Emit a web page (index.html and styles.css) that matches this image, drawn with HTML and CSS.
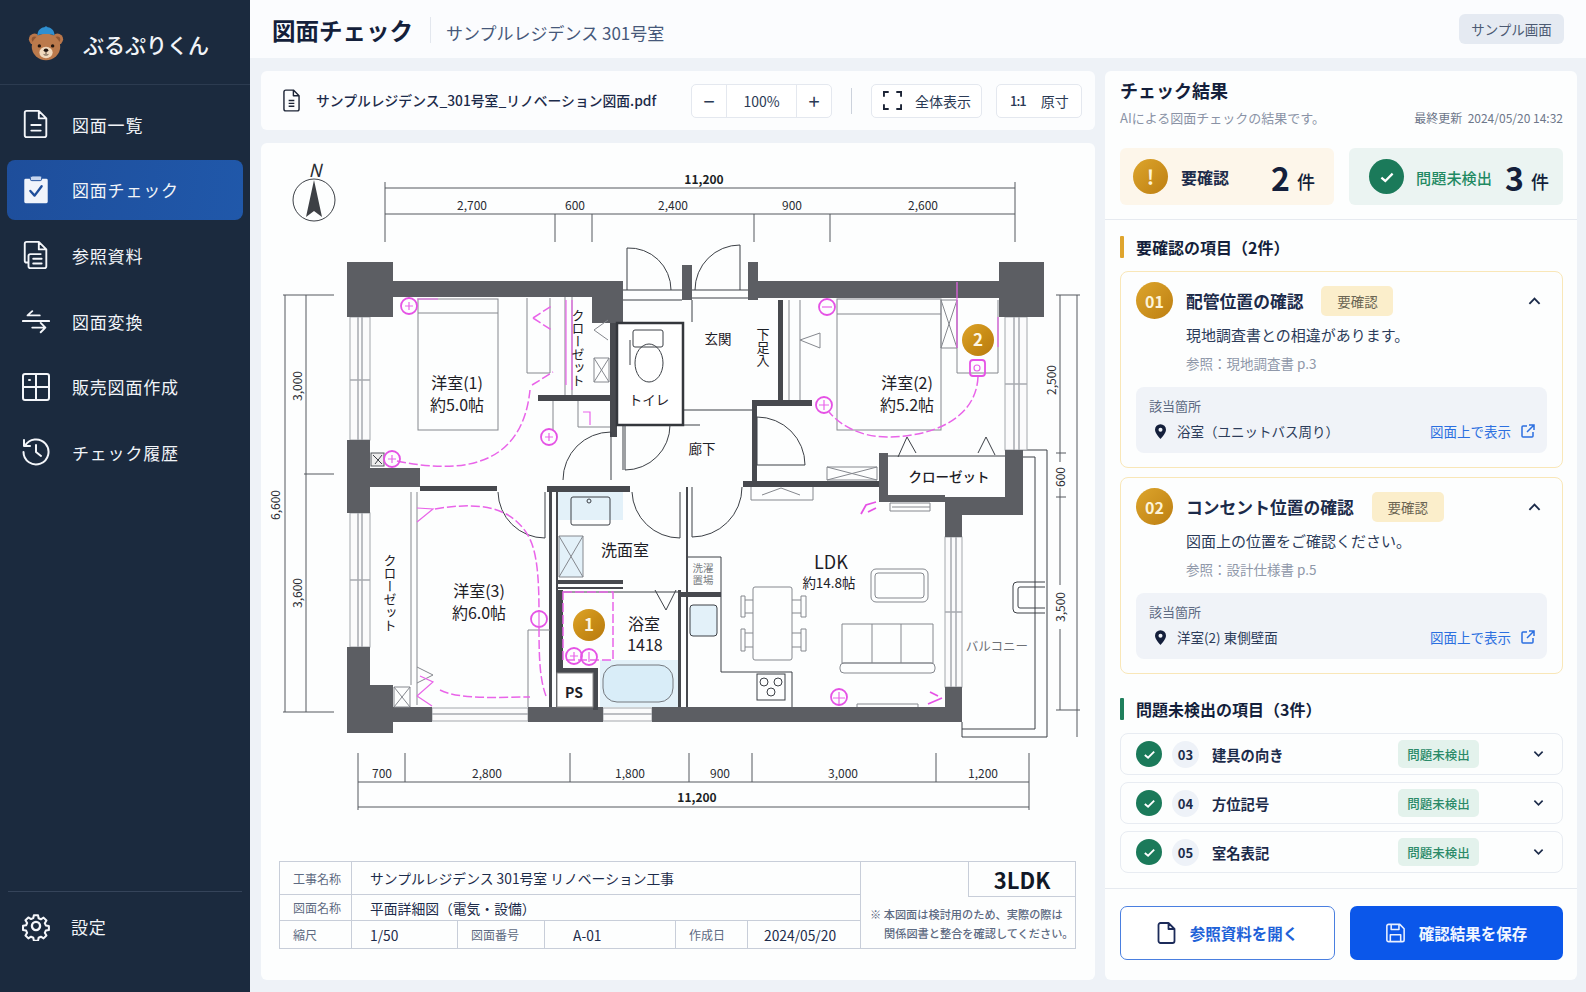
FILE: index.html
```html
<!DOCTYPE html>
<html lang="ja">
<head>
    <meta charset="UTF-8">
    <title>図面チェック</title>
    <link rel="stylesheet" href="styles.css">
</head>
<body>
<div class="app">

    <!-- Sidebar -->
    <aside class="sidebar">
        <div class="brand">
            <svg class="brand-logo" viewBox="0 0 40 40">
                <circle cx="8" cy="15" r="6" fill="#b9764a"/>
                <circle cx="32" cy="15" r="6" fill="#b9764a"/>
                <circle cx="8" cy="15" r="3" fill="#8f5633"/>
                <circle cx="32" cy="15" r="3" fill="#8f5633"/>
                <ellipse cx="20" cy="23" rx="15" ry="14" fill="#bb7a4c"/>
                <path d="M11 11C11 5 15 2 20 2s9 3 9 9c-5-2-13-2-18 0z" fill="#2f8fd0"/>
                <circle cx="20" cy="3" r="1.6" fill="#2f8fd0"/>
                <ellipse cx="20" cy="29" rx="7" ry="6" fill="#f0d9bd"/>
                <circle cx="13" cy="22" r="1.8" fill="#22160f"/>
                <circle cx="27" cy="22" r="1.8" fill="#22160f"/>
                <ellipse cx="20" cy="26.5" rx="2.4" ry="1.8" fill="#22160f"/>
                <path d="M20 28v2.5M17.5 31c1 .8 4 .8 5 0" stroke="#22160f" stroke-width=".8" fill="none"/>
            </svg>
            <span class="brand-name">ぶるぷりくん</span>
        </div>
        <nav class="nav">
            <a class="nav-item">
                <svg class="nav-icon" viewBox="0 0 28 32"><path d="M4 2h13l8 8v18a2 2 0 0 1-2 2H4a2 2 0 0 1-2-2V4a2 2 0 0 1 2-2zM17 2v8h8M9 17h10M9 23h10"/></svg>
                <span>図面一覧</span>
            </a>
            <a class="nav-item active">
                <svg class="nav-icon" viewBox="0 0 28 32"><path class="clip-fill" d="M3 4h22a1.500 1.500 0 0 1 1.500 1.500v23A1.500 1.500 0 0 1 25 30H3a1.500 1.500 0 0 1-1.500-1.500v-23A1.500 1.500 0 0 1 3 4z"/><rect class="clip-top" x="8" y="1" width="12" height="5" rx="1.500"/><path class="clip-check" d="M8 17l4.500 5L20 12"/></svg>
                <span>図面チェック</span>
            </a>
            <a class="nav-item">
                <svg class="nav-icon" viewBox="0 0 28 32"><path d="M6 24H4a2 2 0 0 1-2-2V4a2 2 0 0 1 2-2h13l8 8v18a2 2 0 0 1-2 2H8a2 2 0 0 1-2-2V17a2 2 0 0 1 2-2h11M17 2v8h8M11 20h9M11 25h9"/></svg>
                <span>参照資料</span>
            </a>
            <a class="nav-item">
                <svg class="nav-icon" viewBox="0 0 28 32"><path d="M0 16h28M18 10H5M10 5.500L5 10M10 23h14M19 18l5 5-5 5"/></svg>
                <span>図面変換</span>
            </a>
            <a class="nav-item">
                <svg class="nav-icon" viewBox="0 0 28 28"><rect x="1" y="1" width="26" height="26" rx="2"/><path d="M1 14h26M14 1v26M7 7h1"/></svg>
                <span>販売図面作成</span>
            </a>
            <a class="nav-item">
                <svg class="nav-icon" viewBox="0 0 28 28"><path d="M3 8A12.500 12.500 0 1 1 1.500 14M2 2v6h6M14 7v7l5 4"/></svg>
                <span>チェック履歴</span>
            </a>
        </nav>
        <div class="side-bottom">
            <a class="nav-item">
                <svg class="nav-icon" viewBox="0 0 24 24"><path d="M12 8.500a3.500 3.500 0 1 0 0 7 3.500 3.500 0 0 0 0-7z"/><path d="M10 1.500h4l.6 3 2.200 1 2.600-1.600 2.800 2.800-1.600 2.600 1 2.200 3 .6v-.1 3.900l-3 .6-1 2.200 1.600 2.600-2.800 2.800-2.600-1.600-2.200 1-.6 3h-4l-.6-3-2.200-1-2.600 1.600-2.800-2.800 1.600-2.600-1-2.200-3-.6v-4l3-.6 1-2.200-1.600-2.600 2.800-2.800 2.600 1.600 2.200-1z" transform="translate(1.400 1.400) scale(.88)"/></svg>
                <span>設定</span>
            </a>
        </div>
    </aside>

    <!-- Main -->
    <div class="main">
        <header class="topbar">
            <h1>図面チェック</h1>
            <span class="topbar-sub">サンプルレジデンス 301号室</span>
            <span class="sample-tag">サンプル画面</span>
        </header>

        <div class="content">
            <div class="left-col">
                <div class="toolbar">
                    <svg class="file-icon" viewBox="0 0 18 24"><path d="M3 1h8l6 6v14a2 2 0 0 1-2 2H3a2 2 0 0 1-2-2V3a2 2 0 0 1 2-2zM11 1v6h6M6 12h6M6 15h6M6 18h6"/></svg>
                    <span class="file-name">サンプルレジデンス_301号室_リノベーション図面.pdf</span>
                    <div class="zoom-group">
                        <span class="zoom-btn">−</span>
                        <span class="zoom-val">100%</span>
                        <span class="zoom-btn">+</span>
                    </div>
                    <span class="tool-sep"></span>
                    <span class="tool-btn fit-btn">
                        <svg viewBox="0 0 20 20"><path d="M1 6V1h5M14 1h5v5M19 14v5h-5M6 19H1v-5"/></svg>
                        全体表示
                    </span>
                    <span class="tool-btn size-btn"><b>1:1</b>原寸</span>
                </div>

                <div class="plan-card">
                    <svg class="plan" viewBox="261 143 834 705">
                        <defs>
                            <linearGradient id="gold" x1="0" y1="0" x2="1" y2="1">
                                <stop offset="0" stop-color="#dea42a"/>
                                <stop offset=".5" stop-color="#c98d16"/>
                                <stop offset="1" stop-color="#b97a10"/>
                            </linearGradient>
                        </defs>

                        <!-- compass -->
                        <text class="north" x="315" y="177">N</text>
                        <circle class="line" cx="314" cy="200" r="21"/>
                        <path class="compass" d="M314 180l8 37-8-6-8 6z"/>

                        <!-- top dimensions -->
                        <path class="dim" d="M385 188H1015M385 214H1015M385 182V242M555 214V242M592 214V242M754 214V242M830 214V242M1015 182V242"/>
                        <text class="dim-bold" x="704" y="184">11,200</text>
                        <text class="dim-text" x="472" y="210">2,700</text>
                        <text class="dim-text" x="575" y="210">600</text>
                        <text class="dim-text" x="673" y="210">2,400</text>
                        <text class="dim-text" x="792" y="210">900</text>
                        <text class="dim-text" x="923" y="210">2,600</text>

                        <!-- left dimensions -->
                        <path class="dim" d="M285 295V712M306 295V712M283 295H334M304 474H334M283 712H334"/>
                        <text class="dim-text" transform="translate(302 386) rotate(-90)">3,000</text>
                        <text class="dim-text" transform="translate(280 505) rotate(-90)">6,600</text>
                        <text class="dim-text" transform="translate(302 593) rotate(-90)">3,600</text>

                        <!-- right dimensions -->
                        <path class="dim" d="M1060 295V710M1077 295V737M1056 295H1080M1056 453H1066M1056 497H1066M1056 710H1080"/>
                        <text class="dim-text" transform="translate(1056 380) rotate(-90)">2,500</text>
                        <rect class="blank" x="1052" y="462" width="16" height="26"/>
                        <text class="dim-text" transform="translate(1065 477) rotate(-90)">600</text>
                        <rect class="blank" x="1052" y="585" width="16" height="44"/>
                        <text class="dim-text" transform="translate(1065 607) rotate(-90)">3,500</text>

                        <!-- bottom dimensions -->
                        <path class="dim" d="M358 782H1029M358 807H1029M358 753V810M405 753V782M570 753V782M689 753V782M752 753V782M936 753V782M1029 753V810"/>
                        <text class="dim-text" x="382" y="778">700</text>
                        <text class="dim-text" x="487" y="778">2,800</text>
                        <text class="dim-text" x="630" y="778">1,800</text>
                        <text class="dim-text" x="720" y="778">900</text>
                        <text class="dim-text" x="843" y="778">3,000</text>
                        <text class="dim-text" x="983" y="778">1,200</text>
                        <text class="dim-bold" x="697" y="802">11,200</text>

                        <!-- balcony -->
                        <path class="line" d="M1023 450H1047V737H962V722M1023 457H1035V729H962"/>
                        <path class="line" d="M1045 582H1017a4 4 0 0 0-4 4v23a4 4 0 0 0 4 4h28M1045 587H1020a2 2 0 0 0-2 2v17a2 2 0 0 0 2 2h25"/>
                        <text class="room-sm gray" x="997" y="651">バルコニー</text>

                        <!-- windows -->
                        <g class="window">
                            <rect x="350" y="317" width="20" height="123"/>
                            <rect x="350" y="513" width="20" height="134"/>
                            <rect x="1005" y="317" width="22" height="133"/>
                            <rect x="945" y="537" width="17" height="150"/>
                            <rect x="432" y="708" width="96" height="13"/>
                            <rect x="603" y="708" width="49" height="13"/>
                        </g>
                        <path class="win-in" d="M358 317V440M362 317V440M358 513V647M362 513V647M1014 317V450M1019 317V450M951 537V687M956 537V687M432 714H528M603 714H652M350 380H370M350 580H370M1005 384H1027M945 612H962"/>

                        <!-- walls -->
                        <g class="wall">
                            <rect x="347" y="262" width="46" height="55"/>
                            <rect x="393" y="281" width="230" height="16"/>
                            <rect x="592" y="297" width="31" height="26"/>
                            <rect x="347" y="440" width="23" height="73"/>
                            <rect x="370" y="468" width="50" height="19"/>
                            <rect x="347" y="647" width="23" height="86"/>
                            <rect x="370" y="685" width="23" height="48"/>
                            <rect x="393" y="707" width="39" height="15"/>
                            <rect x="528" y="707" width="75" height="15"/>
                            <rect x="652" y="707" width="310" height="15"/>
                            <rect x="748" y="262" width="10" height="38"/>
                            <rect x="758" y="281" width="241" height="17"/>
                            <rect x="999" y="262" width="45" height="55"/>
                            <rect x="1005" y="450" width="18" height="47"/>
                            <rect x="945" y="497" width="78" height="18"/>
                            <rect x="945" y="515" width="17" height="22"/>
                            <rect x="945" y="687" width="17" height="35"/>
                            <rect x="879" y="453" width="9" height="49"/>
                            <rect x="879" y="495" width="66" height="7"/>
                            <rect x="682" y="265" width="10" height="35"/>
                        </g>
                        <g class="wall-dark">
                            <rect x="610" y="323" width="7" height="114"/>
                            <rect x="538" y="395" width="72" height="6"/>
                            <rect x="420" y="486" width="77" height="5"/>
                            <rect x="547" y="486" width="83" height="6"/>
                            <rect x="549" y="492" width="3" height="215"/>
                            <rect x="556" y="492" width="2" height="215"/>
                            <rect x="557" y="580" width="66" height="4"/>
                            <rect x="557" y="587" width="66" height="2"/>
                            <rect x="558" y="590" width="5" height="78"/>
                            <rect x="557" y="668" width="41" height="5"/>
                            <rect x="593" y="668" width="5" height="42"/>
                            <rect x="678" y="590" width="3" height="117"/>
                            <rect x="778" y="300" width="5" height="103"/>
                            <rect x="752" y="400" width="60" height="6"/>
                            <rect x="752" y="400" width="5" height="83"/>
                            <rect x="743" y="481" width="136" height="6"/>
                            <rect x="686" y="487" width="2" height="220"/>
                            <rect x="680" y="592" width="41" height="5"/>
                        </g>

                        <!-- entry and corridor -->
                        <path class="line" d="M623 290H682M692 290H748M623 300H682M692 298H748M692 300V322M683 410H752M683 425H700M623 470V425"/>
                        <path class="line" d="M627 290V248A42 42 0 0 1 671 290M740 290V245A45 45 0 0 0 695 290"/>

                        <!-- toilet -->
                        <rect class="toilet-box" x="617" y="323" width="66" height="102"/>
                        <rect class="line" x="633" y="330" width="30" height="17" rx="2"/>
                        <ellipse class="line" cx="649" cy="363" rx="14" ry="19"/>
                        <path class="line" d="M630 340V365"/>

                        <!-- doors -->
                        <path class="line" d="M625 425V470A45 45 0 0 0 670 425"/>
                        <path class="line" d="M611 480V432A48 48 0 0 0 563 480"/>
                        <path class="line" d="M757 465V417A48 48 0 0 1 805 465Z"/>
                        <path class="line" d="M692 487V537A50 50 0 0 0 742 487"/>
                        <path class="line" d="M680 492V538A48 48 0 0 1 632 492"/>
                        <path class="line" d="M545 492V538A47 47 0 0 1 498 492"/>

                        <!-- room 1 -->
                        <rect class="furn" x="418" y="299" width="80" height="131"/>
                        <path class="furn" d="M418 313H498M527 298V373H550M550 298V373M594 358H609V382H594ZM594 358L609 382M609 358L594 382M578 401V427H610M594 330L608 320M594 330L608 340"/>
                        <path class="furn" d="M553 401V430M565 297V395M572 297V395"/>
                        <rect class="ac-box" x="371" y="453" width="13" height="13"/>
                        <path class="line" d="M373 455L382 464M382 455L375 464"/>
                        <path class="pink" d="M533 318L553 305M533 318L553 331M532 385L553 372M397 461C460 474 522 468 530 390"/>
                        <path class="pink-solid" d="M566 300V385M572 300V390M583 412H590V425"/>
                        <circle class="pink-thick" cx="409" cy="306" r="8"/>
                        <circle class="pink-thick" cx="392" cy="459" r="8"/>
                        <circle class="pink-thick" cx="549" cy="437" r="8"/>
                        <path class="pink-solid" d="M405 306H413M409 302V310M388 459H396M392 455V463M545 437H553M549 433V441M417 299H438"/>

                        <!-- room 2 -->
                        <rect class="furn" x="837" y="299" width="104" height="131"/>
                        <path class="furn" d="M837 314H941M941 300H957V348H941ZM941 300L957 348M957 300L941 348M957 300V373H998V300"/>
                        <path class="furn" d="M789 300V400M800 300V400M800 340L820 333M800 340L820 348M820 333V348"/>
                        <path class="line" d="M898 457L907 437L916 453M978 453L986 437L995 455M888 456H1005"/>
                        <path class="furn" d="M827 467H877V480H827ZM827 467L877 480M877 467L827 480M751 487V500H813V487M762 495L781 488L800 495"/>
                        <path class="pink" d="M978 377C976 420 930 437 887 437C860 437 840 425 829 412"/>
                        <path class="pink-solid" d="M957 282V348M998 317V347"/>
                        <circle class="pink-thick" cx="827" cy="307" r="8"/>
                        <path class="pink-solid" d="M822 307H832"/>
                        <circle class="pink-thick" cx="824" cy="405" r="8"/>
                        <path class="pink-solid" d="M819 405H829M824 400V410"/>
                        <rect class="pink-thick" x="970" y="360" width="15" height="16" rx="3"/>
                        <circle class="pink-solid" cx="977" cy="368" r="3"/>

                        <!-- room 3 -->
                        <path class="furn" d="M411 492V685M417 492V705M417 667L433 675L417 683M394 687H410V707H394ZM394 687L410 707M410 687L394 707M528 630H550M528 630V707"/>
                        <path class="pink" d="M435 509C470 503 497 505 515 520C532 535 539 550 539 612M539 628C539 660 540 680 546 696M440 690C460 700 500 697 530 697"/>
                        <path class="pink-solid" d="M417 508L433 509L417 522M417 696L433 682L420 676M417 696L432 706"/>
                        <circle class="pink-thick" cx="539" cy="619" r="8"/>
                        <path class="pink-solid" d="M539 611V627"/>

                        <!-- wash room -->
                        <rect class="water" x="558" y="492" width="65" height="28"/>
                        <rect class="line" x="571" y="497" width="39" height="28" rx="2"/>
                        <circle class="line" cx="589" cy="501" r="2"/>
                        <rect class="water" x="559" y="536" width="24" height="41"/>
                        <path class="furn" d="M559 536H583V577H559ZM559 536L583 577M583 536L559 577"/>

                        <!-- bath -->
                        <rect class="water" x="600" y="660" width="78" height="47"/>
                        <rect class="tub" x="603" y="665" width="70" height="37" rx="14"/>
                        <path class="line" d="M655 590L666 610L676 590M563 592H678"/>
                        <rect class="pink" x="563" y="592" width="50" height="68"/>
                        <circle class="pink-thick" cx="574" cy="656" r="8"/>
                        <circle class="pink-thick" cx="589" cy="657" r="8"/>
                        <path class="pink-solid" d="M570 656H578M574 652V660M589 652V662"/>

                        <!-- LDK -->
                        <path class="line" d="M721 557V672H792V707M688 557H721"/>
                        <rect class="water" x="690" y="605" width="27" height="31" rx="3"/>
                        <rect class="line" x="690" y="605" width="27" height="31" rx="3"/>
                        <rect class="furn" x="753" y="587" width="39" height="73" rx="2"/>
                        <path class="furn" d="M741 596H745V617H741ZM741 629H745V651H741ZM801 596H806V617H801ZM801 629H806V651H801ZM745 600H753M745 613H753M745 633H753M745 647H753M792 600H801M792 613H801M792 633H801M792 647H801"/>
                        <rect class="furn" x="871" y="569" width="57" height="33" rx="5"/>
                        <rect class="furn" x="875" y="573" width="49" height="25" rx="3"/>
                        <path class="furn" d="M842 624H933V663H842ZM872 624V663M901 624V663"/>
                        <rect class="furn" x="840" y="663" width="95" height="10" rx="4"/>
                        <rect class="line" x="757" y="674" width="28" height="26"/>
                        <circle class="line" cx="764" cy="682" r="4"/>
                        <circle class="line" cx="778" cy="682" r="4"/>
                        <circle class="line" cx="771" cy="692" r="4"/>
                        <path class="furn" d="M857 707V704H918V707M892 507H930M890 503H930V511H890Z"/>
                        <circle class="pink-thick" cx="839" cy="697" r="8"/>
                        <path class="pink-solid" d="M833 698H845M839 692V704"/>
                        <path class="pink-thick" d="M861 514L866 505L876 502M868 512L876 508M928 704L942 698M930 692L938 696"/>

                        <!-- PS -->
                        <rect class="ps-box" x="557" y="673" width="36" height="34"/>

                        <!-- room labels -->
                        <text class="room" x="457" y="389">洋室(1)</text>
                        <text class="room" x="457" y="411">約5.0帖</text>
                        <text class="room" x="907" y="389">洋室(2)</text>
                        <text class="room" x="907" y="411">約5.2帖</text>
                        <text class="room" x="479" y="597">洋室(3)</text>
                        <text class="room" x="479" y="619">約6.0帖</text>
                        <text class="room" x="625" y="556">洗面室</text>
                        <text class="room" x="644" y="630">浴室</text>
                        <text class="room" x="645" y="651">1418</text>
                        <text class="room-lg" x="831" y="569">LDK</text>
                        <text class="room-sm" x="829" y="588">約14.8帖</text>
                        <text class="room-sm" x="649" y="405">トイレ</text>
                        <text class="room-sm" x="718" y="344">玄関</text>
                        <text class="room-sm" x="702" y="454">廊下</text>
                        <text class="room-sm bold" x="949" y="482">クローゼット</text>
                        <text class="room-bold" x="574" y="698">PS</text>
                        <text class="room-xs" x="703" y="572">洗濯</text>
                        <text class="room-xs" x="703" y="584">置場</text>
                        <text class="room-v" x="578" y="348">クローゼット</text>
                        <text class="room-v" x="390" y="593">クローゼット</text>
                        <text class="room-v" x="763" y="347">下足入</text>

                        <!-- check markers -->
                        <circle cx="589" cy="625" r="16" fill="url(#gold)"/>
                        <text class="marker-num" x="589" y="631">1</text>
                        <circle cx="978" cy="340" r="16" fill="url(#gold)"/>
                        <text class="marker-num" x="978" y="346">2</text>
                    </svg>

                    <div class="title-block">
                        <div class="tb-row tb-row1">
                            <span class="tb-label">工事名称</span>
                            <span class="tb-val">サンプルレジデンス 301号室 リノベーション工事</span>
                        </div>
                        <div class="tb-row tb-row2">
                            <span class="tb-label">図面名称</span>
                            <span class="tb-val">平面詳細図（電気・設備）</span>
                        </div>
                        <div class="tb-row tb-row3">
                            <span class="tb-label">縮尺</span>
                            <span class="tb-val">1/50</span>
                            <span class="tb-label">図面番号</span>
                            <span class="tb-val tb-code">A-01</span>
                            <span class="tb-label">作成日</span>
                            <span class="tb-val tb-date">2024/05/20</span>
                        </div>
                        <div class="tb-side">
                            <div class="tb-type">3LDK</div>
                            <p class="tb-note">※ 本図面は検討用のため、実際の際は<br><span>関係図書と整合を確認してください。</span></p>
                        </div>
                    </div>
                </div>
            </div>

            <!-- Result panel -->
            <section class="panel">
                <div class="panel-head">
                    <h2>チェック結果</h2>
                    <div class="panel-sub">
                        <span>AIによる図面チェックの結果です。</span>
                        <span class="updated">最終更新&nbsp;&nbsp;2024/05/20 14:32</span>
                    </div>
                    <div class="stats">
                        <div class="stat stat-warn">
                            <span class="stat-icon gold">!</span>
                            <span class="stat-label">要確認</span>
                            <span class="stat-num">2</span><span class="stat-unit">件</span>
                        </div>
                        <div class="stat stat-ok">
                            <span class="stat-icon green"><svg viewBox="0 0 16 16"><path d="M3 8.500l3.500 3L13 5"/></svg></span>
                            <span class="stat-label">問題未検出</span>
                            <span class="stat-num">3</span><span class="stat-unit">件</span>
                        </div>
                    </div>
                </div>

                <div class="panel-body">
                    <h3 class="section-title warn">要確認の項目（2件）</h3>

                    <div class="issue">
                        <div class="issue-head">
                            <span class="issue-num">01</span>
                            <span class="issue-title">配管位置の確認</span>
                            <span class="issue-badge">要確認</span>
                            <svg class="chev" viewBox="0 0 14 8"><path d="M1.500 7L7 1.500 12.500 7"/></svg>
                        </div>
                        <p class="issue-desc">現地調査書との相違があります。</p>
                        <p class="issue-ref">参照：現地調査書 p.3</p>
                        <div class="loc">
                            <div class="loc-label">該当箇所</div>
                            <div class="loc-row">
                                <svg class="pin" viewBox="0 0 12 16"><path fill-rule="evenodd" d="M6 0a6 6 0 0 1 6 6c0 4-6 10-6 10S0 10 0 6a6 6 0 0 1 6-6zm0 3.800a2.200 2.200 0 1 0 0 4.400 2.200 2.200 0 0 0 0-4.400z"/></svg>
                                <span class="loc-name">浴室（ユニットバス周り）</span>
                                <a class="loc-link">図面上で表示<svg viewBox="0 0 14 14"><path d="M6 2H2a1 1 0 0 0-1 1v9a1 1 0 0 0 1 1h9a1 1 0 0 0 1-1V8M8 1h5v5M13 1L6 8"/></svg></a>
                            </div>
                        </div>
                    </div>

                    <div class="issue">
                        <div class="issue-head">
                            <span class="issue-num">02</span>
                            <span class="issue-title">コンセント位置の確認</span>
                            <span class="issue-badge">要確認</span>
                            <svg class="chev" viewBox="0 0 14 8"><path d="M1.500 7L7 1.500 12.500 7"/></svg>
                        </div>
                        <p class="issue-desc">図面上の位置をご確認ください。</p>
                        <p class="issue-ref">参照：設計仕様書 p.5</p>
                        <div class="loc">
                            <div class="loc-label">該当箇所</div>
                            <div class="loc-row">
                                <svg class="pin" viewBox="0 0 12 16"><path fill-rule="evenodd" d="M6 0a6 6 0 0 1 6 6c0 4-6 10-6 10S0 10 0 6a6 6 0 0 1 6-6zm0 3.800a2.200 2.200 0 1 0 0 4.400 2.200 2.200 0 0 0 0-4.400z"/></svg>
                                <span class="loc-name">洋室(2) 東側壁面</span>
                                <a class="loc-link">図面上で表示<svg viewBox="0 0 14 14"><path d="M6 2H2a1 1 0 0 0-1 1v9a1 1 0 0 0 1 1h9a1 1 0 0 0 1-1V8M8 1h5v5M13 1L6 8"/></svg></a>
                            </div>
                        </div>
                    </div>

                    <h3 class="section-title ok">問題未検出の項目（3件）</h3>

                    <div class="ok-row">
                        <span class="ok-check"><svg viewBox="0 0 16 16"><path d="M3 8.500l3.500 3L13 5"/></svg></span>
                        <span class="ok-num">03</span>
                        <span class="ok-name">建具の向き</span>
                        <span class="ok-badge">問題未検出</span>
                        <svg class="chev-sm" viewBox="0 0 12 8"><path d="M1.500 1.500L6 6l4.500-4.500"/></svg>
                    </div>
                    <div class="ok-row">
                        <span class="ok-check"><svg viewBox="0 0 16 16"><path d="M3 8.500l3.500 3L13 5"/></svg></span>
                        <span class="ok-num">04</span>
                        <span class="ok-name">方位記号</span>
                        <span class="ok-badge">問題未検出</span>
                        <svg class="chev-sm" viewBox="0 0 12 8"><path d="M1.500 1.500L6 6l4.500-4.500"/></svg>
                    </div>
                    <div class="ok-row">
                        <span class="ok-check"><svg viewBox="0 0 16 16"><path d="M3 8.500l3.500 3L13 5"/></svg></span>
                        <span class="ok-num">05</span>
                        <span class="ok-name">室名表記</span>
                        <span class="ok-badge">問題未検出</span>
                        <svg class="chev-sm" viewBox="0 0 12 8"><path d="M1.500 1.500L6 6l4.500-4.500"/></svg>
                    </div>
                </div>

                <div class="panel-foot">
                    <button class="btn btn-outline">
                        <svg viewBox="0 0 18 22"><path d="M3 1h8l6 6v12a2 2 0 0 1-2 2H3a2 2 0 0 1-2-2V3a2 2 0 0 1 2-2zM11 1v6h6"/></svg>
                        参照資料を開く
                    </button>
                    <button class="btn btn-primary">
                        <svg viewBox="0 0 22 22"><path d="M3 1h13l5 5v13a2 2 0 0 1-2 2H3a2 2 0 0 1-2-2V3a2 2 0 0 1 2-2zM6 1v6h9V1M5 21v-8h12v8"/></svg>
                        確認結果を保存
                    </button>
                </div>
            </section>
        </div>
    </div>
</div>
</body>
</html>
```

FILE: styles.css
```css
* {
    margin: 0;
    padding: 0;
    box-sizing: border-box;
}

body {
    width: 1586px;
    height: 992px;
    overflow: hidden;
    font-family: "Noto Sans CJK JP", "Noto Sans", sans-serif;
    background-color: #eef2f7;
    color: #1c2b4a;
}

.app {
    display: flex;
    height: 992px;
}

/* Sidebar */
.sidebar {
    width: 250px;
    flex-shrink: 0;
    display: flex;
    flex-direction: column;
    background-color: #1b2a3e;
    color: #f1f4f8;
}

.brand {
    height: 85px;
    display: flex;
    align-items: center;
    gap: 18px;
    padding: 3px 0 0 27px;
    border-bottom: 1px solid #2c3b50;
}

.brand-logo {
    width: 38px;
    height: 38px;
}

.brand-name {
    font-size: 21px;
    font-weight: 500;
}

.nav {
    display: flex;
    flex-direction: column;
    gap: 5.700px;
    padding: 9px 7px 0;
    flex: 1;
}

.nav-item {
    height: 60px;
    display: flex;
    align-items: center;
    gap: 22px;
    padding-left: 15px;
    border-radius: 8px;
    font-size: 17px;
    letter-spacing: .8px;
}

.nav-item.active {
    background: linear-gradient(100deg, #1e4e9b, #2058aa);
}

.nav-icon {
    width: 28px;
    height: 30px;
    fill: none;
    stroke: #f4f6fa;
    stroke-width: 2;
    stroke-linecap: round;
    stroke-linejoin: round;
}

.clip-fill {
    fill: #f0f4fb;
    stroke: none;
}

.clip-top {
    fill: #c7d6ee;
    stroke: #1e4e9b;
    stroke-width: 1;
}

.clip-check {
    stroke: #1e4e9b;
    stroke-width: 2.500;
}

.side-bottom {
    margin: 0 8px;
    padding: 4px 0 36px;
    border-top: 1px solid #35445a;
}

.side-bottom .nav-item {
    padding-left: 14px;
    gap: 21px;
}

/* Top bar */
.main {
    flex: 1;
    display: flex;
    flex-direction: column;
    min-width: 0;
}

.topbar {
    height: 58px;
    display: flex;
    align-items: center;
    padding: 0 22px;
    background-color: #fbfcfe;
}

.topbar h1 {
    font-size: 23.500px;
    font-weight: 700;
    color: #141f3b;
    padding-right: 17px;
    border-right: 1px solid #e3e7ee;
    line-height: 26px;
    margin-top: 2px;
}

.topbar-sub {
    margin: 6px 0 0 15px;
    font-size: 17px;
    color: #46587a;
}

.sample-tag {
    margin-left: auto;
    height: 30px;
    width: 105px;
    display: flex;
    align-items: center;
    justify-content: center;
    background-color: #e5eaf2;
    border-radius: 6px;
    font-size: 13.500px;
    color: #4c5a72;
}

.content {
    flex: 1;
    display: flex;
    gap: 10px;
    padding: 13px 9px 12px 11px;
    min-height: 0;
}

.left-col {
    width: 834px;
    display: flex;
    flex-direction: column;
    gap: 13px;
}

/* Toolbar */
.toolbar {
    height: 59px;
    display: flex;
    align-items: center;
    padding-left: 22px;
    background-color: #fcfdfe;
    border-radius: 6px;
    color: #1c2b4a;
}

.file-icon {
    width: 17px;
    height: 23px;
    fill: none;
    stroke: #1c2436;
    stroke-width: 1.500;
    stroke-linejoin: round;
}

.file-name {
    margin: -2px 0 0 16px;
    width: 375px;
    font-size: 13.800px;
    font-weight: 500;
    white-space: nowrap;
}

.zoom-group {
    height: 34px;
    width: 141px;
    display: flex;
    border: 1px solid #e4e8ef;
    border-radius: 5px;
    background-color: #fff;
}

.zoom-btn {
    width: 34px;
    display: flex;
    align-items: center;
    justify-content: center;
    font-size: 20px;
    color: #2b3a55;
}

.zoom-val {
    flex: 1;
    display: flex;
    align-items: center;
    justify-content: center;
    border-left: 1px solid #e4e8ef;
    border-right: 1px solid #e4e8ef;
    font-size: 14px;
    color: #2b3a55;
}

.tool-sep {
    width: 1px;
    height: 26px;
    margin: 0 19px;
    background-color: #ccd2dc;
}

.tool-btn {
    height: 34px;
    display: flex;
    align-items: center;
    border: 1px solid #e4e8ef;
    border-radius: 5px;
    background-color: #fff;
    font-size: 14px;
    color: #2b3a55;
}

.fit-btn {
    width: 111px;
    padding-left: 11px;
    gap: 13px;
}

.fit-btn svg {
    width: 19px;
    height: 19px;
    fill: none;
    stroke: #1c2436;
    stroke-width: 2;
}

.size-btn {
    width: 86px;
    margin-left: 14px;
    padding-left: 13px;
    gap: 15px;
}

.size-btn b {
    font-weight: 500;
    font-size: 13px;
    letter-spacing: -1px;
}

/* Plan */
.plan-card {
    flex: 1;
    background-color: #fdfefe;
    border-radius: 6px;
}

.plan {
    display: block;
    width: 834px;
    height: 705px;
}

.line, .dim, .furn, .pink, .pink-solid, .pink-thick {
    fill: none;
}

.line {
    stroke: #3c4046;
    stroke-width: 1;
}

.dim {
    stroke: #55585e;
    stroke-width: 1;
}

.furn {
    stroke: #85888e;
    stroke-width: 1;
}

.blank {
    fill: #fdfefe;
}

.wall rect {
    fill: #5c5e63;
}

.wall-dark rect {
    fill: #47494e;
}

.window rect {
    fill: #fbfbfc;
    stroke: #a4a7ac;
    stroke-width: 1;
}

.win-in {
    fill: none;
    stroke: #a8abb0;
    stroke-width: 1.500;
}

.toilet-box {
    fill: #fff;
    stroke: #34373c;
    stroke-width: 2.500;
}

.ps-box {
    fill: #fff;
    stroke: #888;
    stroke-width: 1;
}

.ac-box {
    fill: #eee;
    stroke: #55585e;
    stroke-width: 1;
}

.water {
    fill: #e3f1f9;
}

.tub {
    fill: #d9edf8;
    stroke: #75797f;
    stroke-width: 1;
}

.compass {
    fill: #3d4045;
}

.pink {
    stroke: #e964e9;
    stroke-width: 1.500;
    stroke-dasharray: 9 3;
}

.pink-solid {
    stroke: #e964e9;
    stroke-width: 1.200;
}

.pink-thick {
    stroke: #e552e5;
    stroke-width: 1.800;
}

.dim-text, .dim-bold, .room, .room-lg, .room-sm, .room-bold, .room-xs, .marker-num, .north {
    text-anchor: middle;
}

.dim-text {
    font-size: 12px;
    fill: #2a2d33;
}

.dim-bold {
    font-size: 12px;
    font-weight: 700;
    fill: #1b1e24;
}

.north {
    font-size: 18px;
    font-style: italic;
    fill: #2a2d33;
}

.room {
    font-size: 16px;
    fill: #1d2026;
}

.room-lg {
    font-size: 18px;
    fill: #1d2026;
}

.room-sm {
    font-size: 13.500px;
    fill: #1d2026;
}

.room-sm.bold {
    font-weight: 500;
}

.room-sm.gray {
    font-size: 12.500px;
    fill: #6d7076;
}

.room-bold {
    font-size: 14px;
    font-weight: 700;
    fill: #1d2026;
}

.room-xs {
    font-size: 10.500px;
    fill: #7b7e84;
}

.room-v {
    writing-mode: vertical-rl;
    text-anchor: middle;
    font-size: 13px;
    fill: #1d2026;
}

.marker-num {
    font-size: 17px;
    font-weight: 700;
    fill: #fdf6e3;
}

/* Title block */
.title-block {
    position: relative;
    width: 797px;
    height: 88px;
    margin: 13px 0 0 18px;
    border: 1px solid #c8ced9;
    font-size: 13.800px;
    color: #1c2b4a;
}

.tb-row {
    display: grid;
    width: 581px;
    align-items: center;
    border-bottom: 1px solid #c8ced9;
}

.tb-row span {
    display: flex;
    align-items: center;
    height: 100%;
}

.tb-row1 {
    height: 33px;
    grid-template-columns: 72px 1fr;
}

.tb-row2 {
    height: 26px;
    grid-template-columns: 72px 1fr;
}

.tb-row3 {
    height: 27px;
    grid-template-columns: 72px 106px 87px 131px 72px 1fr;
    border-bottom: none;
}

.tb-label {
    padding-left: 13px;
    border-right: 1px solid #c8ced9;
    font-size: 12px;
    color: #5d6a82;
}

.tb-val {
    padding-left: 18px;
    border-right: 1px solid #c8ced9;
}

.tb-row1 .tb-val, .tb-row2 .tb-val, .tb-row3 .tb-val:last-child {
    border-right: none;
}

.tb-row .tb-code {
    padding-left: 28px;
}

.tb-row .tb-date {
    padding-left: 16px;
}

.tb-side {
    position: absolute;
    top: 0;
    right: 0;
    bottom: 0;
    width: 215px;
    border-left: 1px solid #c8ced9;
}

.tb-type {
    width: 107px;
    height: 35px;
    margin-left: auto;
    display: flex;
    align-items: center;
    justify-content: center;
    border-left: 1px solid #c8ced9;
    border-bottom: 1px solid #c8ced9;
    font-size: 22px;
    font-weight: 700;
    color: #111827;
}

.tb-note {
    margin-top: 8px;
    padding-left: 9px;
    font-size: 11.200px;
    font-weight: 500;
    line-height: 19px;
    color: #5d6a82;
    white-space: nowrap;
}

.tb-note span {
    padding-left: 14px;
}

/* Result panel */
.panel {
    flex: 1;
    display: flex;
    flex-direction: column;
    background-color: #fdfefe;
    border-radius: 6px;
}

.panel-head {
    padding: 5px 14px 14px 15px;
    border-bottom: 1px solid #e6eaf0;
}

.panel-head h2 {
    font-size: 18px;
    font-weight: 700;
    color: #141f3b;
    line-height: 28px;
}

.panel-sub {
    display: flex;
    justify-content: space-between;
    align-items: center;
    margin-top: 4px;
    font-size: 13px;
    color: #8a93a6;
    line-height: 20px;
}

.updated {
    font-size: 12px;
    color: #6d778a;
}

.stats {
    display: flex;
    gap: 15px;
    margin-top: 20px;
}

.stat {
    flex: 0 0 214px;
    height: 57px;
    display: flex;
    align-items: center;
    border-radius: 6px;
    white-space: nowrap;
}

.stat-warn {
    padding-left: 13px;
    background-color: #fdf6ea;
}

.stat-ok {
    padding-left: 20px;
    background-color: #ebf4f2;
}

.stat-icon {
    width: 35px;
    height: 35px;
    flex-shrink: 0;
    border-radius: 50%;
    display: flex;
    align-items: center;
    justify-content: center;
    color: #fdf3d8;
    font-size: 20px;
    font-weight: 700;
}

.stat-icon.gold, .issue-num {
    background: linear-gradient(135deg, #dda52c, #bd7f12);
}

.stat-icon.green {
    background-color: #1b7a5a;
}

.stat-icon svg {
    width: 18px;
    height: 18px;
    fill: none;
    stroke: #fff;
    stroke-width: 2;
}

.stat-label {
    margin-left: 13px;
    font-size: 16px;
    font-weight: 700;
}

.stat-ok .stat-label {
    margin-left: 12px;
    font-size: 15.200px;
    font-weight: 500;
    color: #1f8a63;
}

.stat-num {
    margin-left: auto;
    font-size: 32px;
    font-weight: 700;
    color: #141f3b;
    line-height: 1;
}

.stat-unit {
    margin: 8px 19px 0 7px;
    font-size: 18px;
    font-weight: 500;
    color: #141f3b;
}

.stat-ok .stat-unit {
    margin-right: 14px;
}

.panel-body {
    flex: 1;
    padding: 15px 14px 0 15px;
}

.section-title {
    position: relative;
    padding-left: 16px;
    font-size: 16px;
    font-weight: 700;
    line-height: 24px;
    color: #141f3b;
}

.section-title::before {
    content: "";
    position: absolute;
    left: 0;
    top: 1px;
    bottom: 1px;
    width: 4px;
    border-radius: 1px;
}

.section-title.warn::before {
    background-color: #dfa52e;
}

.section-title.ok::before {
    background-color: #1f7f5c;
}

.section-title.warn {
    margin-bottom: 12px;
}

.section-title.ok {
    margin: 23px 0 12px;
}

.issue {
    height: 197px;
    margin-bottom: 9px;
    padding: 10px 15px 0 15px;
    border: 1px solid #f9e7b8;
    border-radius: 8px;
}

.issue-head {
    display: flex;
    align-items: center;
    height: 37px;
}

.issue-num {
    width: 37px;
    height: 37px;
    border-radius: 50%;
    display: flex;
    align-items: center;
    justify-content: center;
    font-size: 16px;
    font-weight: 700;
    color: #fdf3d8;
}

.issue-title {
    margin-left: 13px;
    font-size: 16.800px;
    font-weight: 700;
    color: #1c2b4a;
}

.issue-badge {
    margin-left: 18px;
    width: 72px;
    height: 30px;
    display: flex;
    align-items: center;
    justify-content: center;
    background-color: #fbeecb;
    border-radius: 5px;
    font-size: 13.500px;
    color: #6b6553;
}

.chev {
    margin-left: auto;
    margin-right: 6px;
    width: 13px;
    height: 8px;
    fill: none;
    stroke: #1c2b4a;
    stroke-width: 2;
}

.issue-desc {
    margin: 4px 0 0 50px;
    font-size: 15px;
    line-height: 24px;
    color: #2c3c5a;
}

.issue-ref {
    margin: 6px 0 0 50px;
    font-size: 13.500px;
    line-height: 20px;
    color: #8f98a9;
}

.loc {
    height: 66px;
    margin-top: 14px;
    padding: 9px 12px 0 13px;
    background-color: #f0f3f8;
    border-radius: 8px;
}

.loc-label {
    font-size: 13px;
    line-height: 20px;
    color: #5d6a82;
}

.loc-row {
    display: flex;
    align-items: center;
    margin-top: 5px;
}

.pin {
    width: 11px;
    height: 15px;
    margin-left: 6px;
    fill: #141f3b;
}

.loc-name {
    margin-left: 11px;
    font-size: 13.500px;
    color: #2c3c5a;
}

.loc-link {
    margin-left: auto;
    display: flex;
    align-items: center;
    gap: 10px;
    font-size: 13.500px;
    color: #2b6fe0;
}

.loc-link svg {
    width: 14px;
    height: 14px;
    fill: none;
    stroke: #2b6fe0;
    stroke-width: 1.500;
}

.ok-row {
    position: relative;
    height: 42px;
    display: flex;
    align-items: center;
    margin-bottom: 7px;
    padding-left: 15px;
    border: 1px solid #e8ecf2;
    border-radius: 8px;
}

.ok-check {
    width: 26px;
    height: 26px;
    border-radius: 50%;
    background-color: #1b7a5a;
    display: flex;
    align-items: center;
    justify-content: center;
}

.ok-check svg {
    width: 15px;
    height: 15px;
    fill: none;
    stroke: #fff;
    stroke-width: 2;
}

.ok-num {
    width: 27px;
    height: 27px;
    margin-left: 10px;
    border-radius: 50%;
    background-color: #eef2f8;
    display: flex;
    align-items: center;
    justify-content: center;
    font-size: 13px;
    font-weight: 700;
}

.ok-name {
    margin-left: 13px;
    font-size: 14.300px;
    font-weight: 700;
}

.ok-badge {
    margin-left: auto;
    width: 81px;
    height: 28px;
    display: flex;
    align-items: center;
    justify-content: center;
    background-color: #e3f2ec;
    border-radius: 5px;
    font-size: 12.500px;
    font-weight: 500;
    color: #2a8a68;
}

.chev-sm {
    margin-left: 54px;
    margin-right: 18px;
    width: 11px;
    height: 8px;
    fill: none;
    stroke: #1c2b4a;
    stroke-width: 1.800;
}

.panel-foot {
    display: flex;
    gap: 15px;
    height: 92px;
    padding: 17px 14px 20px 15px;
    border-top: 1px solid #e6eaf0;
}

.btn {
    flex: 1 1 0;
    display: flex;
    align-items: center;
    justify-content: center;
    gap: 14px;
    border-radius: 7px;
    font-family: inherit;
    font-size: 15.500px;
    font-weight: 700;
}

.btn svg {
    width: 19px;
    height: 22px;
    fill: none;
    stroke-width: 1.800;
    stroke-linejoin: round;
}

.btn-outline {
    background-color: #fff;
    border: 1.500px solid #4a7fe0;
    color: #1f62d8;
}

.btn-outline svg {
    stroke: #1c2b5a;
}

.btn-primary {
    background-color: #0b57ea;
    border: none;
    color: #f2f6ff;
}

.btn-primary svg {
    stroke: #eaf0ff;
}
```
